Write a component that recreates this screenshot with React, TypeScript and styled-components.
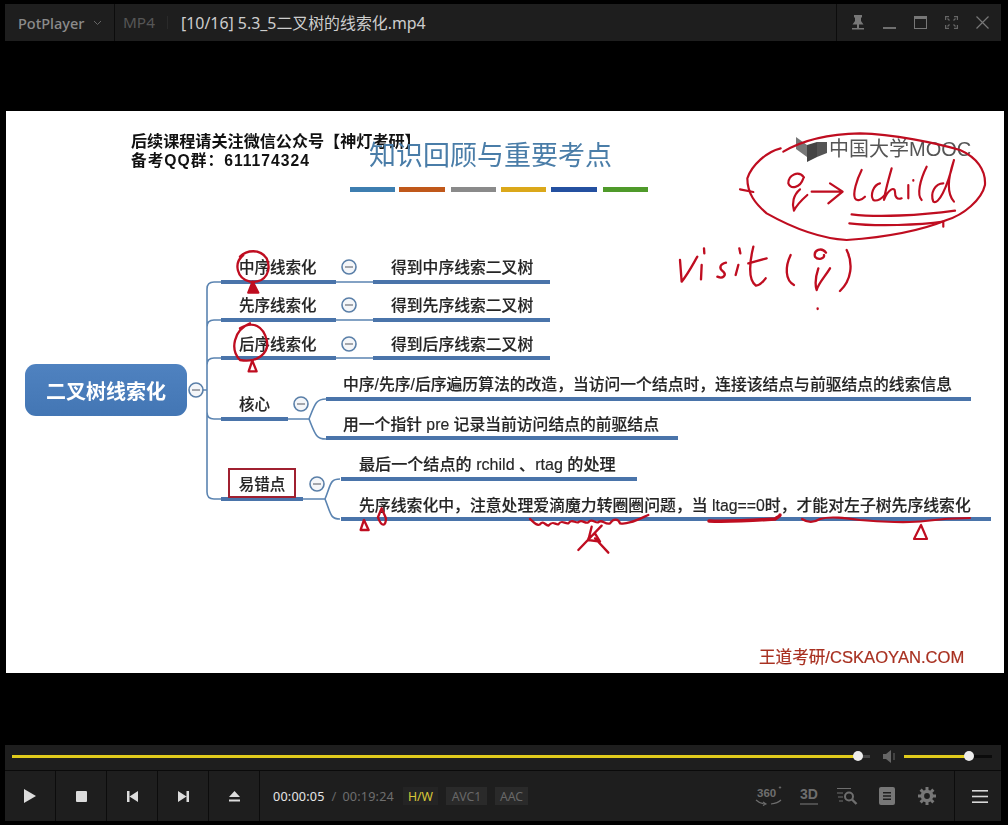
import React from "react";
import styled, { createGlobalStyle } from "styled-components";

const Global = createGlobalStyle`
  html, body { margin: 0; padding: 0; background: #000; }
  #root { width: 1008px; height: 825px; overflow: hidden; }
`;

const UI_FONT = `"Noto Sans", "Noto Sans CJK SC", sans-serif`;
const CJK_FONT = `"Liberation Sans", "Noto Sans CJK SC", sans-serif`;

const Player = styled.div`
  width: 1008px;
  height: 825px;
  box-sizing: border-box;
  padding-bottom: 4px;
  background: #000;
  display: flex;
  flex-direction: column;
  font-family: ${UI_FONT};
`;

const TitleBar = styled.header`
  margin: 4px 7px 0 5px;
  height: 37px;
  background: #1e1e1e;
  display: flex;
  align-items: center;
  flex-shrink: 0;
`;
const BrandButton = styled.div`
  width: 110px;
  height: 100%;
  box-sizing: border-box;
  padding-left: 13px;
  display: flex;
  align-items: center;
  gap: 9px;
  border-right: 1px solid #0c0c0c;
  color: #8b8b8b;
  font-size: 14.5px;
  font-weight: 500;
`;
const Format = styled.span`
  margin-left: 8px;
  color: #565656;
  font-size: 15.3px;
  width: 44px;
  border-right: 1px solid #2a2a2a;
  line-height: 13px;
`;
const FileName = styled.span`
  margin-left: 13px;
  color: #cdcdcd;
  font-size: 15.9px;
  flex: 1;
  white-space: nowrap;
`;
const WindowButtons = styled.div`
  width: 165px;
  height: 100%;
  box-sizing: border-box;
  border-left: 1px solid #0c0c0c;
  padding-left: 14px;
  display: flex;
  align-items: center;
  gap: 18px;
`;

const VideoArea = styled.main`
  flex: 1;
  padding: 70px 4px 71px 6px;
  display: flex;
  min-height: 0;
`;
const Slide = styled.section`
  position: relative;
  width: 998px;
  height: 562px;
  background: #fff;
  overflow: hidden;
  filter: blur(0.35px);
`;
const Canvas = styled.svg`
  position: absolute;
  left: 0;
  top: 0;
  width: 998px;
  height: 562px;
`;
const Label = styled.div<{ $x: number; $y: number; $size?: number; $weight?: number; $color?: string; $sp?: number; $stroke?: number }>`
  position: absolute;
  left: ${(p) => p.$x - 6}px;
  top: ${(p) => p.$y - 110}px;
  transform: translateY(-50%);
  white-space: nowrap;
  line-height: 1.1;
  font-family: ${CJK_FONT};
  font-size: ${(p) => p.$size ?? 15.5}px;
  font-weight: ${(p) => p.$weight ?? 500};
  color: ${(p) => p.$color ?? "#252525"};
  letter-spacing: ${(p) => p.$sp ?? 0}px;
  -webkit-text-stroke: ${(p) => p.$stroke ?? 0.15}px currentColor;
`;
const RootNode = styled.div`
  position: absolute;
  left: 19px;
  top: 253px;
  width: 162px;
  height: 52px;
  border-radius: 11px;
  background: linear-gradient(180deg, #4f82c0 0%, #4376b4 100%);
  display: flex;
  align-items: center;
  justify-content: center;
  color: #fff;
  font-family: ${CJK_FONT};
  font-size: 20px;
  font-weight: 700;
`;
const FlagBox = styled.div`
  position: absolute;
  left: 222px;
  top: 357px;
  width: 64px;
  height: 26px;
  border: 2px solid #a02030;
  display: flex;
  align-items: center;
  justify-content: center;
  background: #fff;
  color: #252525;
  font-family: ${CJK_FONT};
  font-size: 15.5px;
  font-weight: 500;
  -webkit-text-stroke: 0.15px currentColor;
`;
const Logo = styled.svg`
  position: absolute;
  left: 790px;
  top: 25px;
  width: 31px;
  height: 27px;
`;

const SeekBar = styled.div`
  margin: 0 7px 0 5px;
  height: 26px;
  background: #1e1e1e;
  border-bottom: 1px solid #0a0a0a;
  display: flex;
  align-items: center;
  flex-shrink: 0;
  padding-left: 7px;
  padding-bottom: 2px;
  box-sizing: border-box;
`;
const Track = styled.div<{ $w: number; $rest: number; $base: string }>`
  position: relative;
  width: ${(p) => p.$w}px;
  height: 3px;
  background: linear-gradient(90deg, #e0cb1c ${(p) => 100 - p.$rest}%, ${(p) => p.$base} ${(p) => 100 - p.$rest}%);
  flex-shrink: 0;
`;
const Thumb = styled.span<{ $x: number }>`
  position: absolute;
  left: ${(p) => p.$x - 5}px;
  top: -4px;
  width: 10px;
  height: 10px;
  border-radius: 50%;
  background: #ececec;
`;
const SpeakerIcon = styled.svg`
  display: block;
  flex-shrink: 0;
  margin-left: 13px;
`;
const VolumeTrack = styled(Track)`
  margin-left: 8px;
`;
const ControlBar = styled.div`
  margin: 0 7px 0 5px;
  height: 50px;
  background: #1e1e1e;
  display: flex;
  align-items: center;
  flex-shrink: 0;
`;
const CtlButton = styled.div`
  width: 51px;
  height: 100%;
  box-sizing: border-box;
  border-right: 1px solid #0c0c0c;
  display: flex;
  align-items: center;
  justify-content: center;
`;
const Time = styled.span<{ $dim?: boolean }>`
  font-size: 12.6px;
  color: ${(p) => (p.$dim ? "#6e6e6e" : "#e6e6e6")};
  letter-spacing: 0.2px;
  white-space: nowrap;
`;
const Slash = styled.span`
  font-size: 13px;
  color: #666;
  margin: 0 6px 0 7px;
`;
const TimeGroup = styled.div`
  margin-left: 13px;
  display: flex;
  align-items: center;
  width: 130px;
`;
const Badge = styled.span<{ $on?: boolean; $w: number }>`
  width: ${(p) => p.$w}px;
  height: 18px;
  margin-right: 8px;
  background: ${(p) => (p.$on ? "#242424" : "#2a2a2a")};
  color: ${(p) => (p.$on ? "#d8c838" : "#686868")};
  font-size: 12.3px;
  display: flex;
  align-items: center;
  justify-content: center;
  flex-shrink: 0;
`;
const ToolIcons = styled.div`
  margin-left: auto;
  display: flex;
  align-items: center;
  height: 100%;
`;
const ToolSlot = styled.div<{ $w: number }>`
  width: ${(p) => p.$w}px;
  display: flex;
  align-items: center;
  justify-content: center;
`;
const MenuButton = styled.div`
  width: 47px;
  height: 100%;
  box-sizing: border-box;
  border-left: 1px solid #0c0c0c;
  padding-left: 4px;
  display: flex;
  align-items: center;
  justify-content: center;
`;
const Ico = styled.svg`
  display: block;
  flex-shrink: 0;
`;

const INK = "#bf0d20";
const LINE = "#5b84b1";
const BAR = "#4a74aa";

const Minus = ({ x, y }: { x: number; y: number }) => (
  <g>
    <circle cx={x} cy={y} r={7} fill="#f4f6f9" stroke="#5a7fa8" strokeWidth={1.6} />
    <line x1={x - 4} y1={y} x2={x + 4} y2={y} stroke="#8f9298" strokeWidth={1.6} />
  </g>
);
const Bar = ({ x1, x2, y, w = 4 }: { x1: number; x2: number; y: number; w?: number }) => (
  <line x1={x1} x2={x2} y1={y} y2={y} stroke={BAR} strokeWidth={w} />
);

const Diagram = () => (
  <Canvas viewBox="6 111 998 562" fill="none">
    {[
      [350, 395, "#3d7eb0"],
      [399, 445, "#c0581a"],
      [451, 496, "#8a8a8a"],
      [501, 546, "#dba81a"],
      [551, 597, "#2450a0"],
      [603, 648, "#4f9a2a"],
    ].map(([a, b, c]) => (
      <rect key={String(c)} x={a as number} y={187} width={(b as number) - (a as number)} height={5} fill={c as string} />
    ))}
    <path d="M221 282H214Q207 282 207 289V492Q207 499 214 499H221M207 327Q207 320 214 320H221M207 365Q207 358 214 358H221M207 412Q207 419 214 419H221M189 390H207" stroke={LINE} strokeWidth={1.6} />
    <path d="M336 282H373M336 320H373M336 358H373" stroke={LINE} strokeWidth={1.6} />
    <path d="M288 419H309M326 399C316 399 315 404 309 419C315 434 316 439 326 439" stroke={LINE} strokeWidth={1.6} />
    <path d="M303 499H325M340 479C330 479 331 484 325 499C331 514 330 519 340 519" stroke={LINE} strokeWidth={1.6} />
    <Bar x1={221} x2={336} y={282} />
    <Bar x1={373} x2={550} y={282} />
    <Bar x1={221} x2={336} y={320} />
    <Bar x1={373} x2={550} y={320} />
    <Bar x1={221} x2={336} y={358} />
    <Bar x1={373} x2={550} y={358} />
    <Bar x1={221} x2={288} y={419} />
    <Bar x1={326} x2={971} y={399} />
    <Bar x1={326} x2={678} y={438} />
    <Bar x1={221} x2={303} y={499} />
    <Bar x1={341} x2={637} y={479} />
    <Bar x1={341} x2={991} y={519} />
    <Minus x={349} y={267} />
    <Minus x={349} y={305} />
    <Minus x={349} y={344} />
    <Minus x={196} y={390} />
    <Minus x={301} y={404} />
    <Minus x={317} y={484} />
  </Canvas>
);

const Ink = () => (
  <Canvas viewBox="6 111 998 562" fill="none" stroke={INK} strokeWidth={2.2} strokeLinecap="round" strokeLinejoin="round">
    <g transform="translate(660 120) scale(0.3333)" strokeWidth={6.5}>
      <path d="M370 95C420 65 500 42 600 40C700 42 830 70 900 90C950 112 978 150 975 195C965 240 910 285 860 300C800 325 700 350 560 360C480 355 400 325 320 280C285 250 262 220 262 175C275 135 320 95 362 85" />
      <path d="M240 208L280 216" />
      <path d="M432 172C415 150 385 165 385 190C392 208 420 205 430 175M442 225C425 240 410 255 402 272C395 250 400 225 420 208" />
      <path d="M455 215H540M510 190L548 215L505 250" />
      <path d="M605 150C590 180 578 220 585 235C590 245 605 240 615 230" />
      <path d="M660 190C640 195 630 225 640 240C650 245 665 235 675 225" />
      <path d="M695 145C685 180 675 215 672 240C685 205 705 200 705 215C705 230 710 240 725 235" />
      <path d="M745 195L745 235M760 180V182" />
      <path d="M800 140C780 180 770 225 785 240" />
      <path d="M850 190C825 190 810 220 820 245C835 255 860 210 882 120C865 170 860 220 882 245" />
      <path d="M575 283C650 292 780 287 885 272" strokeWidth={7} />
      <path d="M568 310C650 320 780 315 850 305V320" />
    </g>
    <g transform="translate(670 240) scale(0.3333)" strokeWidth={7}>
      <path d="M30 60L35 125C55 100 70 70 82 50" />
      <path d="M95 75L93 118M102 25L103 40" />
      <path d="M168 68C150 72 145 85 160 95C170 105 160 118 142 110" />
      <path d="M205 75L197 105M208 25L211 40" />
      <path d="M250 20C240 60 232 120 258 137C270 135 280 125 287 115M235 70L290 55" />
      <path d="M362 45C345 80 345 120 372 135" />
      <path d="M468 38C455 20 430 30 435 50C445 62 465 55 462 45M480 85C465 110 445 130 440 150C432 125 440 100 445 85" />
      <path d="M530 30C550 70 545 120 510 153" />
      <path d="M443 205V207" />
    </g>
    <g transform="translate(0 240) scale(0.3333)" strokeWidth={7}>
      <path d="M730 45C700 70 710 115 750 125C800 130 815 90 800 55C780 25 740 30 720 50" />
      <path d="M758 125L745 158H775Z" fill={INK} />
      <path d="M750 250C700 270 690 330 720 360C770 370 810 340 800 300C790 260 760 240 720 265" />
      <path d="M757 362L746 394H770Z" />
      <path d="M1092 840L1082 870H1106Z" />
      <path d="M1145 805L1134 832C1145 862 1158 860 1158 835Z" />
    </g>
    <g transform="translate(520 505) scale(0.3333)" strokeWidth={7}>
      <path d="M30 42C40 50 50 65 60 58C70 45 75 60 85 62C100 45 105 60 115 58C125 42 135 58 145 55C155 40 165 55 175 52C185 40 195 58 205 52C215 38 225 55 235 52C245 40 255 60 270 55C280 40 295 40 300 55C320 60 350 45 385 30" />
      <path d="M245 62L175 135M215 65L205 105L240 110L225 85L205 100M225 100L265 143" />
    </g>
    <path d="M709 521C730 522 760 520 775 519C778 517 780 516 780 515" strokeWidth={3.5} />
    <path d="M802 519C808 523 815 522 820 519C830 516 845 518 860 520C880 522 910 523 925 521C940 519 955 518 970 518" />
    <path d="M921 525L914 539H927L921 525Z" />
  </Canvas>
);

export default function App() {
  return (
    <Player>
      <Global />
      <TitleBar>
        <BrandButton>
          <span>PotPlayer</span>
          <Ico width="9" height="6" viewBox="0 0 9 6" fill="none" stroke="#666" strokeWidth="1">
            <path d="M1 1L4.5 4.5L8 1" />
          </Ico>
        </BrandButton>
        <Format>MP4</Format>
        <FileName>[10/16] 5.3_5二叉树的线索化.mp4</FileName>
        <WindowButtons>
          <Ico width="14" height="15" viewBox="0 0 14 15" fill="#777">
            <path d="M3 0H11V2L10 3V6L12.5 9.5H8V13H13V14.5H1V13H6V9.5H1.5L4 6V3L3 2Z" />
          </Ico>
          <Ico width="13" height="15" viewBox="0 0 13 15" fill="#6f6f6f">
            <rect x="0" y="12" width="13" height="2" />
          </Ico>
          <Ico width="13" height="13" viewBox="0 0 13 13" fill="none" stroke="#777">
            <rect x="0.5" y="0.5" width="12" height="12" strokeWidth="1" />
            <rect x="0" y="0" width="13" height="3" fill="#777" stroke="none" />
          </Ico>
          <Ico width="13" height="13" viewBox="0 0 13 13" fill="none" stroke="#666" strokeWidth="1.2">
            <path d="M0.6 4V0.6H4M9 0.6H12.4V4M12.4 9V12.4H9M4 12.4H0.6V9" />
            <path d="M2.5 2.5L4.5 4.5M10.5 2.5L8.5 4.5M10.5 10.5L8.5 8.5M2.5 10.5L4.5 8.5" />
          </Ico>
          <Ico width="13" height="13" viewBox="0 0 13 13" fill="none" stroke="#777" strokeWidth="1.2">
            <path d="M0.5 0.5L12.5 12.5M12.5 0.5L0.5 12.5" />
          </Ico>
        </WindowButtons>
      </TitleBar>

      <VideoArea>
        <Slide>
          <Diagram />
          <Label $x={131} $y={141} $size={16.1} $weight={700} $color="#111" $stroke={0}>后续课程请关注微信公众号【神灯考研】</Label>
          <Label $x={131} $y={160} $size={15.7} $weight={700} $color="#111" $sp={1} $stroke={0}>备考QQ群：611174324</Label>
          <Label $x={369} $y={156} $size={27} $weight={400} $color="#4a7da8" $stroke={0}>知识回顾与重要考点</Label>
          <Logo viewBox="0 0 31 27">
            <path d="M0 1L11 9V21L0 13Z" fill="#777" />
            <path d="M11 9L21 6V21L11 26Z" fill="#444" />
            <path d="M21 6H31V17L21 21Z" fill="#555" />
          </Logo>
          <Label $x={829} $y={148} $size={20} $weight={400} $color="#555" $stroke={0}>中国大学MOOC</Label>
          <RootNode>二叉树线索化</RootNode>

          <Label $x={239} $y={267}>中序线索化</Label>
          <Label $x={239} $y={305}>先序线索化</Label>
          <Label $x={239} $y={344}>后序线索化</Label>
          <Label $x={239} $y={404}>核心</Label>
          <FlagBox>易错点</FlagBox>

          <Label $x={391} $y={267} $size={15.8}>得到中序线索二叉树</Label>
          <Label $x={391} $y={305} $size={15.8}>得到先序线索二叉树</Label>
          <Label $x={391} $y={344} $size={15.8}>得到后序线索二叉树</Label>
          <Label $x={343} $y={384} $size={15.8}>中序/先序/后序遍历算法的改造，当访问一个结点时，连接该结点与前驱结点的线索信息</Label>
          <Label $x={343} $y={424} $size={15.8}>用一个指针 pre 记录当前访问结点的前驱结点</Label>
          <Label $x={359} $y={464} $size={16.1}>最后一个结点的 rchild 、rtag 的处理</Label>
          <Label $x={359} $y={505} $size={15.85}>先序线索化中，注意处理爱滴魔力转圈圈问题，当 ltag==0时，才能对左子树先序线索化</Label>
          <Label $x={759} $y={657} $size={16.6} $weight={400} $color="#a83020" $stroke={0.2}>王道考研/CSKAOYAN.COM</Label>
          <Ink />
        </Slide>
      </VideoArea>

      <SeekBar>
        <Track $w={858} $rest={1.4} $base="#444">
          <Thumb $x={846} />
        </Track>
        <SpeakerIcon width="13" height="13" viewBox="0 0 13 13" fill="#666">
          <path d="M0 4H3L8 0V13L3 9H0Z" />
          <rect x="10.5" y="3" width="1" height="7" />
        </SpeakerIcon>
        <VolumeTrack $w={88} $rest={26} $base="#0b0b0b">
          <Thumb $x={65} />
        </VolumeTrack>
      </SeekBar>

      <ControlBar>
        <CtlButton>
          <Ico width="12" height="14" viewBox="0 0 12 14" fill="#dcdcdc"><path d="M0 0L12 7L0 14Z" /></Ico>
        </CtlButton>
        <CtlButton>
          <Ico width="11" height="11" viewBox="0 0 11 11" fill="#dcdcdc"><rect width="11" height="11" rx="1" /></Ico>
        </CtlButton>
        <CtlButton>
          <Ico width="11" height="11" viewBox="0 0 11 11" fill="#dcdcdc"><path d="M0 0H2.5V11H0ZM11 0V11L2.5 5.5Z" /></Ico>
        </CtlButton>
        <CtlButton>
          <Ico width="11" height="11" viewBox="0 0 11 11" fill="#dcdcdc"><path d="M8.5 0H11V11H8.5ZM0 0V11L8.5 5.5Z" /></Ico>
        </CtlButton>
        <CtlButton>
          <Ico width="11" height="11" viewBox="0 0 11 11" fill="#dcdcdc"><path d="M5.5 0L11 6H0ZM0 8.5H11V10.5H0Z" /></Ico>
        </CtlButton>
        <TimeGroup>
          <Time>00:00:05</Time>
          <Slash>/</Slash>
          <Time $dim>00:19:24</Time>
        </TimeGroup>
        <Badge $on $w={35}>H/W</Badge>
        <Badge $w={41}>AVC1</Badge>
        <Badge $w={33}>AAC</Badge>
        <ToolIcons>
          <ToolSlot $w={43}>
            <Ico width="27" height="20" viewBox="0 0 27 20" fill="none" stroke="#6e6e6e">
              <text x="2" y="11" fontSize="11.5" fill="#6e6e6e" stroke="none" fontFamily="Liberation Sans" fontWeight="700">360</text>
              <circle cx="25" cy="1.5" r="0.7" fill="#6e6e6e" />
              <path d="M1 14C4 17 8 18 11 18M8 16L11 18L8 19.5M26 14C23 17 19 17.6 16 18" strokeWidth="1.1" />
            </Ico>
          </ToolSlot>
          <ToolSlot $w={37}>
            <Ico width="18" height="20" viewBox="0 0 18 20" fill="none" stroke="#6e6e6e">
              <text x="0" y="13" fontSize="14" fill="#6e6e6e" stroke="none" fontFamily="Liberation Sans" fontWeight="700">3D</text>
              <path d="M0 18H18" strokeWidth="1.2" />
            </Ico>
          </ToolSlot>
          <ToolSlot $w={40}>
            <Ico width="22" height="18" viewBox="0 0 22 18" fill="none" stroke="#6e6e6e" strokeWidth="1.2">
              <path d="M1 1.5H15M1 6H7M2 10H7M3 14H7" />
              <circle cx="13" cy="9.5" r="4" strokeWidth="2" />
              <path d="M16 12.5L20.5 17" strokeWidth="2.4" />
            </Ico>
          </ToolSlot>
          <ToolSlot $w={40}>
            <Ico width="16" height="18" viewBox="0 0 16 18" fill="#777">
              <path fillRule="evenodd" d="M2 0H14Q16 0 16 2V16Q16 18 14 18H2Q0 18 0 16V2Q0 0 2 0ZM4 5V6.5H12V5ZM4 8.2V9.7H12V8.2ZM4 11.4V12.9H12V11.4Z" />
            </Ico>
          </ToolSlot>
          <ToolSlot $w={39}>
            <Ico width="18" height="18" viewBox="0 0 18 18" fill="none" stroke="#777">
              <circle cx="9" cy="9" r="4.6" strokeWidth="3.4" />
              <path d="M9 0V3.5M9 14.5V18M0 9H3.5M14.5 9H18M2.6 2.6L5 5M13 13L15.4 15.4M15.4 2.6L13 5M5 13L2.6 15.4" strokeWidth="3" />
            </Ico>
          </ToolSlot>
          <ToolSlot $w={8} />
          <MenuButton>
            <Ico width="16" height="13" viewBox="0 0 16 13" fill="#d8d8d8">
              <rect width="16" height="1.6" />
              <rect y="5.7" width="16" height="1.6" />
              <rect y="11.4" width="16" height="1.6" />
            </Ico>
          </MenuButton>
        </ToolIcons>
      </ControlBar>
    </Player>
  );
}
